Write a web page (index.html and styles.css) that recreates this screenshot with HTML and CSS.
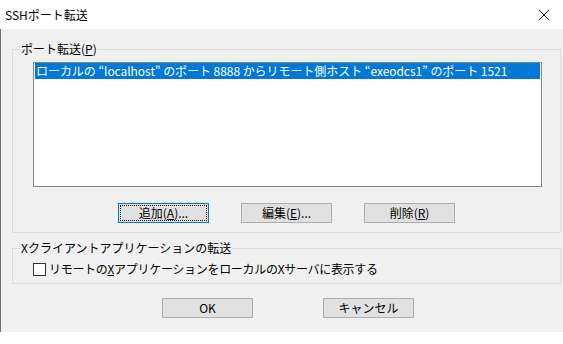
FILE: index.html
```html
<!DOCTYPE html>
<html lang="ja">
<head>
    <meta charset="UTF-8">
    <title>SSHポート転送</title>
    <link rel="stylesheet" href="styles.css">
</head>
<body>
    <div class="window">
        <div class="titlebar">
            <span class="title">SSHポート転送</span>
            <svg class="close" width="12" height="12" viewBox="0 0 12 12">
                <path d="M1 1 L11 11 M11 1 L1 11" stroke="#111" stroke-width="1" fill="none"/>
            </svg>
        </div>

        <div class="client">
            <fieldset class="group forward">
                <legend>ポート転送(<u>P</u>)</legend>
                <div class="listbox">
                    <div class="item selected">ローカルの “localhost” のポート 8888 からリモート側ホスト “exeodcs1” のポート 1521</div>
                </div>
                <div class="list-buttons">
                    <button class="btn focused">追加(<u>A</u>)...</button>
                    <button class="btn">編集(<u>E</u>)...</button>
                    <button class="btn">削除(<u>R</u>)</button>
                </div>
            </fieldset>

            <fieldset class="group x11">
                <legend>Xクライアントアプリケーションの転送</legend>
                <label class="check">
                    <span class="box"></span>
                    <span>リモートの<u>X</u>アプリケーションをローカルのXサーバに表示する</span>
                </label>
            </fieldset>

            <div class="dialog-buttons">
                <button class="btn">OK</button>
                <button class="btn">キャンセル</button>
            </div>
        </div>
    </div>
</body>
</html>
```

FILE: styles.css
```css
:root {
    --face: #f0f0f0;
    --frame: #dcdcdc;
    --select: #0078d7;
    --text: #000;
}

body {
    margin: 0;
    background: #fff;
    font-family: "Noto Sans CJK JP", "Noto Sans", sans-serif;
    font-size: 12px;
    color: var(--text);
}

.window {
    width: 563px;
}

.titlebar {
    height: 29px;
    display: flex;
    align-items: center;
    justify-content: space-between;
    padding: 0 13px 0 5px;
    background: #fff;
}

.title {
    font-size: 12px;
    line-height: 16px;
}

.client {
    height: 303px;
    background: var(--face);
    border-left: 1px solid #707070;
    padding-top: 12px;
    box-sizing: border-box;
}

.group {
    margin: 0 2px 0 11px;
    padding: 0;
    border: 1px solid var(--frame);
    min-width: 0;
}

.group legend {
    margin-left: 7px;
    padding: 0 1px;
    line-height: 16px;
}

u {
    text-decoration: underline;
    text-underline-offset: 1px;
}

.listbox {
    margin: 5px 18px 0 20px;
    height: 125px;
    box-sizing: border-box;
    border: 1px solid #828790;
    background: #fff;
    padding: 0 1px;
}

.item {
    line-height: 16px;
    padding-left: 1px;
    white-space: nowrap;
    overflow: hidden;
    letter-spacing: -0.05px;
}

.item.selected {
    background: var(--select);
    color: #fff;
}

.list-buttons {
    display: flex;
    gap: 32px;
    padding: 16px 0 9px 105px;
}

.btn {
    width: 91px;
    height: 20px;
    padding: 0;
    font: inherit;
    line-height: 16px;
    color: var(--text);
    background: #e1e1e1;
    border: 1px solid #adadad;
}

.btn.focused {
    border-color: var(--select);
    outline: 1px dotted #000;
    outline-offset: -3px;
}

.x11 {
    margin-top: 7px;
}

.check {
    display: flex;
    align-items: center;
    gap: 3px;
    padding: 6px 0 7px 20px;
    line-height: 14px;
    letter-spacing: -0.3px;
}

.box {
    width: 11px;
    height: 11px;
    border: 1px solid #333;
    background: #fff;
}

.dialog-buttons {
    display: flex;
    gap: 70px;
    padding: 14px 0 0 161px;
}
```
